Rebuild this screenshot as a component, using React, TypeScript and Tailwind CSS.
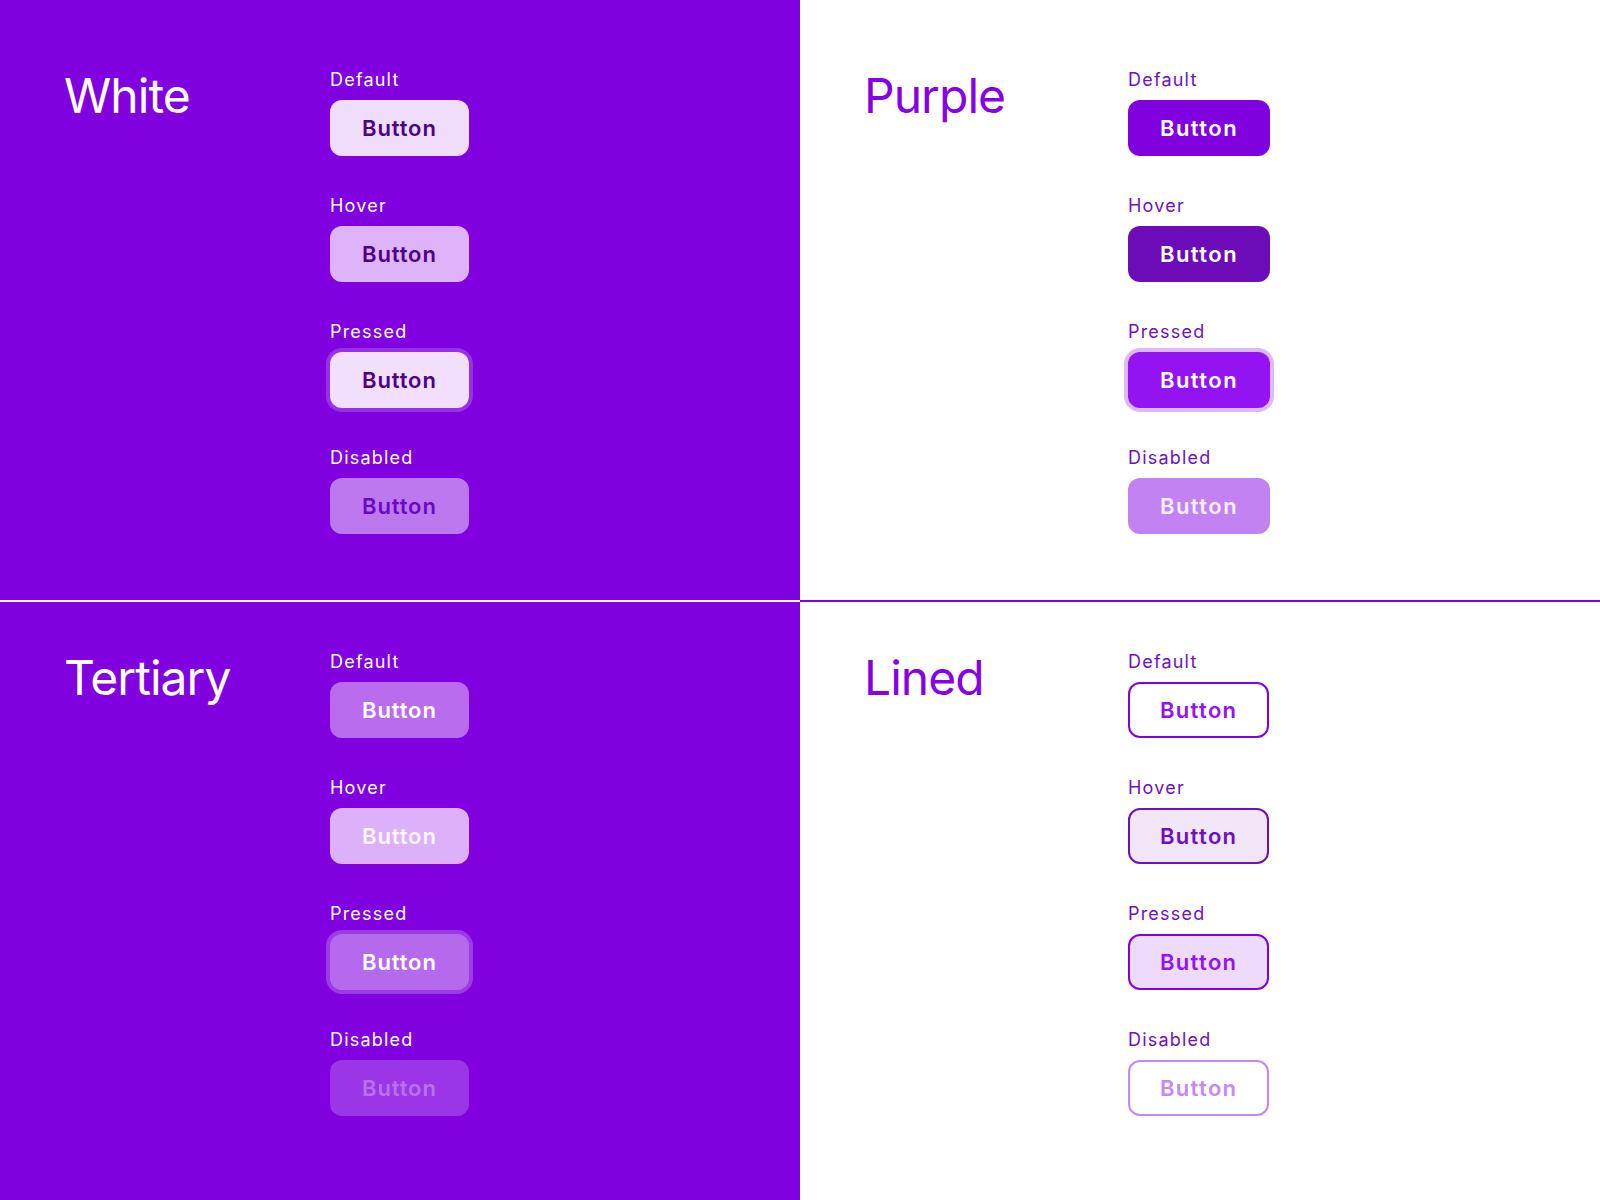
import React from "react";

type Variant = {
  label: string;
  btn: string;
};

const font = { fontFamily: "Inter, 'Noto Sans', sans-serif" };

const white: Variant[] = [
  { label: "Default", btn: "px-8 bg-[#f0ddfc] text-[#4d0085] tracking-[0.04em]" },
  { label: "Hover", btn: "px-8 bg-[#dfb3fa] text-[#4d0085] tracking-[0.04em]" },
  { label: "Pressed", btn: "px-8 bg-[#f2defd] text-[#4d0085] tracking-[0.04em] ring-4 ring-[#9632e6]" },
  { label: "Disabled", btn: "px-8 bg-[#bd78f0] text-[#6a0ac0] tracking-[0.04em]" },
];

const purple: Variant[] = [
  { label: "Default", btn: "px-8 bg-[#8000e0] text-white tracking-[0.065em]" },
  { label: "Hover", btn: "px-8 bg-[#6c0cb8] text-white tracking-[0.065em]" },
  { label: "Pressed", btn: "px-8 bg-[#9313f2] text-white tracking-[0.065em] ring-4 ring-[#ddb8fa]" },
  { label: "Disabled", btn: "px-8 bg-[#c282f2] text-[#f8eeff] tracking-[0.065em]" },
];

const tertiary: Variant[] = [
  { label: "Default", btn: "px-8 bg-[#b96cee] text-white tracking-[0.04em]" },
  { label: "Hover", btn: "px-8 bg-[#ddb0fa] text-[#fdf5ff] tracking-[0.04em]" },
  { label: "Pressed", btn: "px-8 bg-[#b56aee] text-white tracking-[0.04em] ring-4 ring-[#9a3be6]" },
  { label: "Disabled", btn: "px-8 bg-[#9a36e6] text-[#ba70ee] tracking-[0.04em]" },
];

// border eats 2px each side, so padding is trimmed to keep the same width
const lined: Variant[] = [
  { label: "Default", btn: "px-[30px] bg-white border-2 border-[#8000e0] text-[#9214f0] tracking-[0.06em]" },
  { label: "Hover", btn: "px-[30px] bg-[#f1e5f8] border-2 border-[#6e10c0] text-[#6e10c0] tracking-[0.06em]" },
  { label: "Pressed", btn: "px-[30px] bg-[#eedafb] border-2 border-[#8000e0] text-[#9214f0] tracking-[0.06em]" },
  { label: "Disabled", btn: "px-[30px] bg-white border-2 border-[#c688f6] text-[#c688f6] tracking-[0.06em]" },
];

function Section({
  title,
  items,
  dark,
  className,
}: {
  title: string;
  items: Variant[];
  dark: boolean;
  className: string;
}) {
  return (
    <div className={`flex pl-16 ${className}`}>
      <h2
        className={`text-[48px] leading-[56px] font-normal tracking-[-0.02em] ${
          dark ? "w-[266px] text-white" : "w-[264px] text-[#8500e4]"
        }`}
      >
        {title}
      </h2>
      <div className="flex flex-col gap-[38px]">
        {items.map((it) => (
          <div key={it.label} className="flex flex-col gap-2">
            <span
              className={`text-[18px] leading-6 tracking-[1.2px] ${
                dark ? "text-white" : "text-[#7010c0]"
              }`}
            >
              {it.label}
            </span>
            <button
              className={`h-14 rounded-xl text-[22px] font-semibold flex items-center justify-center self-start ${it.btn}`}
            >
              Button
            </button>
          </div>
        ))}
      </div>
    </div>
  );
}

export default function App() {
  return (
    <div className="w-[1600px] h-[1200px] grid grid-cols-2 bg-white" style={font}>
      <Section
        title="White"
        items={white}
        dark
        className="h-[602px] pt-[68px] bg-[#8000e0] border-b-2 border-white"
      />
      <Section
        title="Purple"
        items={purple}
        dark={false}
        className="h-[602px] pt-[68px] bg-white border-b-2 border-[#8000e0]"
      />
      <Section
        title="Tertiary"
        items={tertiary}
        dark
        className="h-[598px] pt-[48px] bg-[#8000e0]"
      />
      <Section
        title="Lined"
        items={lined}
        dark={false}
        className="h-[598px] pt-[48px] bg-white"
      />
    </div>
  );
}
